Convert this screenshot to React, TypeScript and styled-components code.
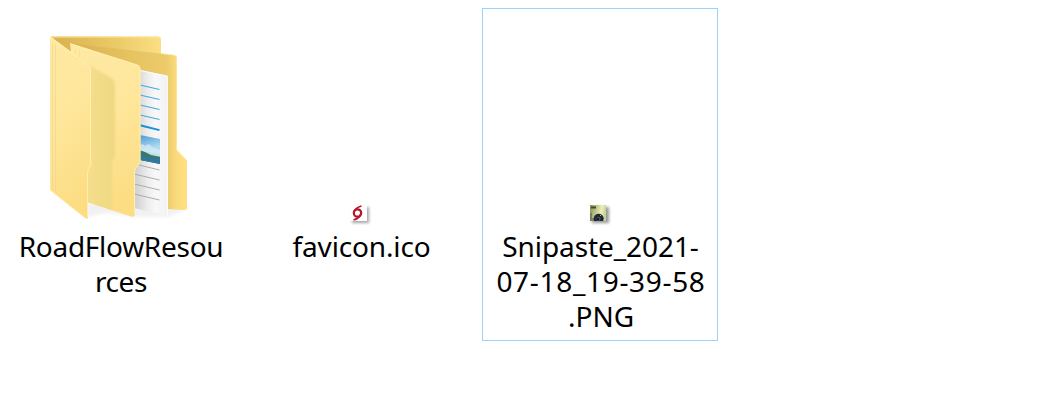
import React from "react";
import styled, { createGlobalStyle } from "styled-components";

const GlobalStyle = createGlobalStyle`
  body { margin: 0; background: #fff; }
`;

const FileGrid = styled.main`
  display: flex;
  align-items: flex-start;
  gap: 4px;
  height: 410px;
  box-sizing: border-box;
  padding: 8px 0 0 2px;
  overflow: hidden;
  background: #fff;
`;

const FileTile = styled.article<{ $focused?: boolean }>`
  display: flex;
  flex-direction: column;
  align-items: center;
  box-sizing: border-box;
  width: 236px;
  height: 333px;
  border: 1px solid ${(p) => (p.$focused ? "#99d1ff" : "transparent")};
`;

const Preview = styled.div`
  display: flex;
  align-items: flex-end;
  justify-content: center;
  height: 220px;
  width: 100%;
  svg { display: block; flex: none; }
`;

const FileName = styled.div`
  display: flex;
  flex-direction: column;
  align-items: center;
  font: 28px/35px "Noto Sans", "Open Sans", sans-serif;
  color: #000;
`;

const NameLine = styled.span<{ $spacing: number; $shift?: number }>`
  white-space: nowrap;
  letter-spacing: ${(p) => p.$spacing}px;
  margin-left: ${(p) => p.$shift ?? 0}px;
`;

const FolderIcon = () => (
  <svg width="160" height="204" viewBox="40 25 160 204">
    <defs>
      <linearGradient id="back" x1="0" x2="1" y1="0" y2="0">
        <stop offset="0" stopColor="#d9b04e" />
        <stop offset="0.55" stopColor="#e9c865" />
        <stop offset="1" stopColor="#fbdf83" />
      </linearGradient>
      <linearGradient id="cover" x1="0" x2="0.25" y1="0" y2="1">
        <stop offset="0" stopColor="#ffe9a4" />
        <stop offset="0.5" stopColor="#fee69b" />
        <stop offset="1" stopColor="#fcdd84" />
      </linearGradient>
      <linearGradient id="right" x1="0" x2="1" y1="0" y2="0">
        <stop offset="0" stopColor="#d8b04f" />
        <stop offset="0.5" stopColor="#e6c360" />
        <stop offset="0.82" stopColor="#ecca6b" />
        <stop offset="0.91" stopColor="#fadb7c" />
        <stop offset="1" stopColor="#ffdf80" />
      </linearGradient>
      <linearGradient id="shade" gradientUnits="userSpaceOnUse" x1="91" x2="116" y1="0" y2="0">
        <stop offset="0" stopColor="#f4dd8b" />
        <stop offset="1" stopColor="#f0d881" />
      </linearGradient>
      <linearGradient id="paper" gradientUnits="userSpaceOnUse" x1="137" x2="168" y1="0" y2="0">
        <stop offset="0" stopColor="#d4d4d4" />
        <stop offset="0.35" stopColor="#ededed" />
        <stop offset="0.6" stopColor="#f8f8f8" />
        <stop offset="1" stopColor="#f1f2f4" />
      </linearGradient>
      <linearGradient id="sky" x1="0" x2="0.2" y1="0" y2="1">
        <stop offset="0" stopColor="#3e91d0" />
        <stop offset="0.55" stopColor="#a9d8ef" />
        <stop offset="1" stopColor="#d1e9ef" />
      </linearGradient>
      <clipPath id="photoClip"><path d="M140 135L160 139V164L140 160Z" /></clipPath>
      <filter id="soft" x="-20%" y="-20%" width="140%" height="140%"><feGaussianBlur stdDeviation="1.5" /></filter>
      <filter id="shadeBlur" x="-20%" y="-20%" width="140%" height="140%"><feGaussianBlur stdDeviation="1.3" /></filter>
      <clipPath id="middleClip"><path d="M70 43L137 64.500Q140.500 65.700 140.500 69V162L136 168Q135 169.500 135 171V214.500Q134.500 217.500 131 216.500L87 202Z" /></clipPath>
    </defs>
    <path d="M87 203L87 217L107 213L135 217L168 217L190 207L175 203Z" fill="#999" opacity=".13" filter="url(#soft)" />
    <path d="M50.500 36.500H158Q161 36.500 161 39.500V58L75 50L91 70Z" fill="url(#back)" />
    <path d="M51 37H158Q160.500 37 160.500 39.500" fill="none" stroke="#ffe697" />
    <path d="M70 43.500L173.500 55Q177 55.500 177 58.500V150L186 159.500Q187 160.500 187 162V207Q187 210 184 210L135 207Z" fill="url(#right)" />
    <path d="M161 53.500L173.500 55Q176.500 55.500 176.500 58.500V150L186 160" fill="none" stroke="#ffe793" strokeWidth=".8" />
    <path d="M135 68.500L167.500 76L168 215.700L134 208Z" fill="url(#paper)" />
    <path d="M140 70.500L167.500 76V215.500" fill="none" stroke="#fff" strokeWidth=".8" />
    <path d="M140 85L159.500 89.500M140 95L159.500 99.500M140 105L159.500 109.500M140 115L159.500 119.500" fill="none" stroke="#45a6df" strokeWidth="1.150" />
    <path d="M140 125.300L159.500 130.100" fill="none" stroke="#1590d9" strokeWidth="2" />
    <g clipPath="url(#photoClip)">
      <path d="M139 133H161V165H139Z" fill="url(#sky)" />
      <path d="M139 147Q142 142 145 146Q149 142 152 147L160 150V154L139 151Z" fill="#d8edf7" opacity=".7" />
      <path d="M139 150L145 152L151 155L161 157V165H139Z" fill="#3b786b" />
      <path d="M139 155L151 158L161 159V165H139Z" fill="#2f789f" />
    </g>
    <path d="M139 165L159.500 170M134 174L159.500 180M134 184L159.500 190M134 194L159.500 200" fill="none" stroke="#a5a5a5" strokeWidth=".9" />
    <path d="M70 43L137 64.500Q140.500 65.700 140.500 69V162L136 168Q135 169.500 135 171V214.500Q134.500 217.500 131 216.500L87 202Z" fill="url(#cover)" />
    <g clipPath="url(#middleClip)">
      <path d="M78 59L110 77Q115 80 115 86V154Q115 158 112 163V225H84V172L91 165Z" fill="url(#shade)" filter="url(#shadeBlur)" />
    </g>
    <path d="M70.500 44L137 65Q140 66 140 69V162L135.500 168.500Q134.500 170 134.500 172V214" fill="none" stroke="#fff0af" strokeWidth=".9" />
    <path d="M75.500 49V54M79.500 51V57" stroke="#f5df92" />
    <path d="M50.500 36.500L89 65Q91 67 91 70V165L88.500 170.500Q88 172 88 174V218Q87 219.500 85 218L50.500 190.500Z" fill="url(#cover)" />
    <path d="M51 37.500L88.500 65.500Q90.500 67 90.500 70V165L88 170.500Q87.500 172 87.500 174V217" fill="none" stroke="#fff0af" strokeWidth=".9" />
    <path d="M52.500 43V190M55.500 44V192" stroke="#efd58a" strokeWidth=".8" opacity=".8" />
    <path d="M50.500 38V190L86 218" fill="none" stroke="#ffe492" strokeWidth=".8" />
  </svg>
);

const Favicon = () => (
  <svg width="36" height="32" viewBox="342 197 36 32">
    <defs><filter id="faviconShadow" x="-50%" y="-50%" width="200%" height="200%"><feGaussianBlur stdDeviation="1.5" /></filter></defs>
    <path d="M352 207H369V223H352Z" fill="#000" opacity=".35" filter="url(#faviconShadow)" />
    <path d="M350 205H367V221H350Z" fill="#fff" />
    <ellipse cx="357.500" cy="213" rx="3.700" ry="3.700" fill="none" stroke="#b91328" strokeWidth="2.200" />
    <path d="M354.500 211Q356 207.500 361.500 206M361 213.500Q360 218 353.500 220" fill="none" stroke="#b91328" strokeWidth="1.800" />
  </svg>
);

const PhotoIcon = () => (
  <svg width="36" height="32" viewBox="582 197 36 32">
    <defs>
      <filter id="photoShadow" x="-50%" y="-50%" width="200%" height="200%"><feGaussianBlur stdDeviation="1.5" /></filter>
      <linearGradient id="photoGreen" x1="0" x2="1" y1="0" y2="0.2">
        <stop offset="0" stopColor="#82905b" />
        <stop offset="0.45" stopColor="#c3cb88" />
        <stop offset="0.75" stopColor="#edf0ba" />
        <stop offset="1" stopColor="#c8d298" />
      </linearGradient>
      <filter id="lensBlur"><feGaussianBlur stdDeviation="0.4" /></filter>
      <clipPath id="thumbClip"><path d="M590 205H606V221H590Z" /></clipPath>
    </defs>
    <path d="M592 207H609V223H592Z" fill="#000" opacity=".4" filter="url(#photoShadow)" />
    <g clipPath="url(#thumbClip)">
      <path d="M590 205H606V221H590Z" fill="url(#photoGreen)" />
      <g filter="url(#lensBlur)">
        <path d="M591 206.500H596V208.500H591Z" fill="#424a30" />
        <path d="M590 213H592V222H590ZM591 218H595V222H591Z" fill="#656f49" opacity=".7" />
        <circle cx="598.700" cy="218.800" r="5" fill="#202733" />
        <circle cx="598.500" cy="218.800" r="2.100" fill="#4b5870" />
        <circle cx="598" cy="219" r="1.200" fill="#121520" />
      </g>
      <path d="M600 215H601V216H600Z" fill="#a9b4be" />
    </g>
  </svg>
);

const App = () => (
  <>
    <GlobalStyle />
    <FileGrid>
      <FileTile>
        <Preview><FolderIcon /></Preview>
        <FileName>
          <NameLine $spacing={-0.28} $shift={2}>RoadFlowResou</NameLine>
          <NameLine $spacing={-0.4} $shift={2}>rces</NameLine>
        </FileName>
      </FileTile>
      <FileTile>
        <Preview><Favicon /></Preview>
        <FileName><NameLine $spacing={-0.15} $shift={3}>favicon.ico</NameLine></FileName>
      </FileTile>
      <FileTile $focused>
        <Preview><PhotoIcon /></Preview>
        <FileName>
          <NameLine $spacing={-0.08} $shift={1}>Snipaste_2021-</NameLine>
          <NameLine $spacing={0.68} $shift={2}>07-18_19-39-58</NameLine>
          <NameLine $spacing={0} $shift={2}>.PNG</NameLine>
        </FileName>
      </FileTile>
    </FileGrid>
  </>
);

export default App;
